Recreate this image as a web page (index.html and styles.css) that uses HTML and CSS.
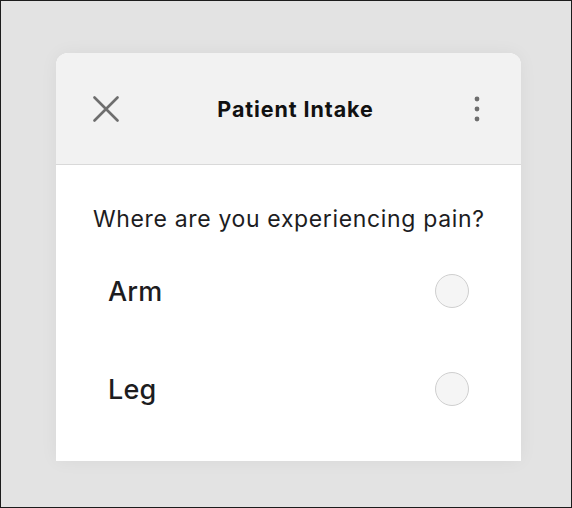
FILE: index.html
```html
<!DOCTYPE html>
<html>
<head>
<meta charset="utf-8">
<link rel="stylesheet" href="styles.css">
</head>
<body>
<div class="card">
  <div class="header">
    <button class="icon-btn close" aria-label="Close">
      <svg width="26" height="26" viewBox="0 0 26 26"><path d="M1.5 1.5 L24.5 24.5 M24.5 1.5 L1.5 24.5" stroke="#6e6e6e" stroke-width="2.6" stroke-linecap="round" fill="none"/></svg>
    </button>
    <div class="title">Patient Intake</div>
    <button class="icon-btn more" aria-label="More">
      <svg width="6" height="26" viewBox="0 0 6 26"><circle cx="3" cy="3" r="2.4" fill="#6e6e6e"/><circle cx="3" cy="13" r="2.4" fill="#6e6e6e"/><circle cx="3" cy="23" r="2.4" fill="#6e6e6e"/></svg>
    </button>
  </div>
  <div class="content">
    <div class="question">Where are you experiencing pain?</div>
    <label class="option"><span class="label">Arm</span><span class="radio"></span></label>
    <label class="option"><span class="label">Leg</span><span class="radio"></span></label>
  </div>
</div>
</body>
</html>
```
FILE: styles.css
```css
html, body {
  margin: 0;
  padding: 0;
}
body {
  width: 572px;
  height: 508px;
  box-sizing: border-box;
  border: 1px solid #1c1c1c;
  background: #e3e3e3;
  padding: 52px 0 0 55px;
  font-family: Inter, "Noto Sans", sans-serif;
  color: #1d1d1f;
  overflow: hidden;
}
.card {
  width: 465px;
  height: 408px;
  background: #ffffff;
  border-radius: 12px 12px 0 0;
  overflow: hidden;
  box-shadow: 0 0 18px rgba(0, 0, 0, 0.05);
}
.header {
  height: 111px;
  background: #f2f2f2;
  border-bottom: 1px solid #d9d9d9;
  display: flex;
  align-items: center;
  padding: 0 41px 0 37px;
}
.icon-btn {
  border: none;
  background: none;
  padding: 0;
  margin: 0;
  display: flex;
}
.title {
  flex: 1;
  text-align: center;
  font-size: 21.5px;
  letter-spacing: 0.9px;
  font-weight: 700;
  color: #111;
  padding: 1px 2px 0 0;
}
.content {
  padding-top: 40px;
}
.question {
  padding-left: 37px;
  font-size: 23px;
  letter-spacing: 0.65px;
  line-height: 28px;
  color: #1d1d1f;
  margin-bottom: 9px;
}
.option {
  height: 98px;
  display: flex;
  align-items: center;
  justify-content: space-between;
  padding: 0 51px 0 52px;
}
.label {
  font-size: 27px;
  letter-spacing: 0.2px;
  font-weight: 500;
  color: #1d1d1f;
}
.radio {
  width: 32px;
  height: 32px;
  border-radius: 50%;
  border: 1.5px solid #cfcfcf;
  background: #f5f5f5;
  margin-right: 1px;
}
```
